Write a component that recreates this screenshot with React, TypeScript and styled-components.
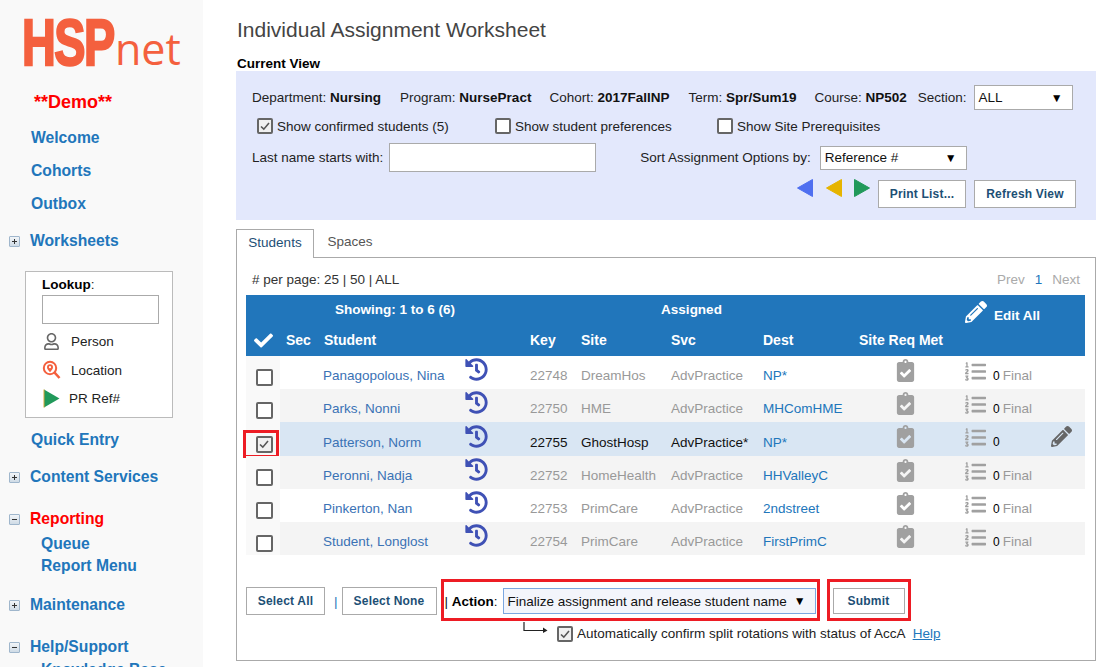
import styled, { createGlobalStyle } from 'styled-components';
import { FaCheck, FaClipboardCheck, FaHistory, FaListOl, FaPencilAlt, FaRegUser } from 'react-icons/fa';

const GlobalStyle = createGlobalStyle`
    html, body {
        margin: 0;
        height: 667px;
        overflow: hidden;
        background: #fff;
        font-family: "Liberation Sans", Arial, sans-serif;
        font-size: 13.5px;
        color: #222;
    }
`;

const Page = styled.div`
    display: flex;
    height: 667px;
    overflow: hidden;
`;

const Sidebar = styled.nav`
    width: 203px;
    flex: none;
    background: #f9f9f9;
    display: flex;
    flex-direction: column;
    padding-top: 5px;
    box-sizing: border-box;
    height: 667px;
    overflow: hidden;
`;

const Logo = styled.svg`
    display: block;
    margin-left: 22px;
    flex: none;
`;

const DemoTag = styled.div`
    margin: 11px 0 8px 34px;
    color: #ff0000;
    font-size: 18px;
    font-weight: 700;
    line-height: 22px;
`;

const NavLink = styled.a<{ $mt?: number }>`
    display: block;
    margin: ${({ $mt }) => $mt ?? 0}px 0 0 31px;
    height: 33px;
    line-height: 33px;
    font-size: 15.7px;
    font-weight: 700;
    color: #2176bb;
    flex: none;
`;

const SubLink = styled.a<{ $mt?: number }>`
    display: block;
    margin: ${({ $mt }) => $mt ?? 0}px 0 0 41px;
    height: 22px;
    line-height: 22px;
    font-size: 15.7px;
    font-weight: 700;
    color: #2176bb;
    flex: none;
`;

const Group = styled.div<{ $mt: number; $active?: boolean }>`
    display: flex;
    align-items: center;
    margin: ${({ $mt }) => $mt}px 0 0 9px;
    height: 24px;
    gap: 10px;
    font-size: 15.7px;
    font-weight: 700;
    color: ${({ $active }) => ($active ? '#ff0000' : '#2176bb')};
    flex: none;
`;

const Toggle = styled.span`
    position: relative;
    width: 9px;
    height: 9px;
    border: 1px solid #9fb6cc;
    border-radius: 1px;
    background: linear-gradient(#f2f5f8, #cfdbe6);
    flex: none;

    &:before {
        content: "";
        position: absolute;
        left: 2px;
        right: 2px;
        top: 4px;
        height: 1px;
        background: #333;
    }
`;

const PlusToggle = styled(Toggle)`
    &:after {
        content: "";
        position: absolute;
        top: 2px;
        bottom: 2px;
        left: 4px;
        width: 1px;
        background: #333;
    }
`;

const LookupBox = styled.div`
    margin: 18px 0 0 25px;
    width: 148px;
    height: 147px;
    box-sizing: border-box;
    border: 1px solid #bbb;
    background: #fff;
    padding: 4px 0 0 16px;
    flex: none;
    color: #222;
`;

const LookupLabel = styled.div`
    line-height: 17px;
    margin-bottom: 2px;

    b {
        color: #000;
    }
`;

const LookupInput = styled.input`
    display: block;
    width: 117px;
    height: 29px;
    box-sizing: border-box;
    border: 1px solid #aaa;
    background: #fff;
    margin-bottom: 3px;
`;

const LookupRow = styled.div<{ $gap: number; $h: number }>`
    display: flex;
    align-items: center;
    height: ${({ $h }) => $h}px;
    gap: ${({ $gap }) => $gap}px;
`;

const LookupIcon = styled.span`
    width: 19px;
    display: flex;
    justify-content: center;
    align-items: center;
    color: #666;
    flex: none;
    font-size: 17px;
`;

const Main = styled.main`
    flex: 1;
    min-width: 0;
    padding-left: 33px;
    padding-right: 7px;
`;

const Title = styled.h1`
    margin: 0;
    padding-top: 17px;
    height: 25px;
    line-height: 25px;
    font-size: 21px;
    font-weight: 400;
    color: #444;
    padding-left: 1px;
`;

const ViewLabel = styled.div`
    margin-top: 13px;
    padding-left: 1px;
    height: 16px;
    line-height: 17px;
    font-weight: 700;
    color: #000;
`;

const ViewPanel = styled.section`
    height: 149px;
    box-sizing: border-box;
    background: #e3e8fc;
    padding: 14px 20px 0 16px;
`;

const InfoRow = styled.div`
    display: flex;
    align-items: center;
    height: 25px;
`;

const Info = styled.span<{ $gap: number }>`
    margin-right: ${({ $gap }) => $gap}px;
    white-space: nowrap;

    b {
        color: #111;
    }
`;

const OptionRow = styled.div`
    display: grid;
    grid-template-columns: 238px 222px auto;
    margin: 7px 0 0 5px;
    height: 18px;
    align-items: center;
`;

const CheckLabel = styled.label`
    display: flex;
    align-items: center;
    gap: 4px;
    white-space: nowrap;
`;

const Box = styled.span<{ $size?: number; $tint?: boolean }>`
    width: ${({ $size }) => $size ?? 16}px;
    height: ${({ $size }) => $size ?? 16}px;
    box-sizing: border-box;
    border: 2px solid #666;
    border-radius: 2px;
    background: ${({ $tint }) => ($tint ? '#f0f0f0' : '#fff')};
    display: flex;
    align-items: center;
    justify-content: center;
    flex: none;
`;

const ConfirmBox = styled(Box)`
    margin: 0 4px 0 9px;
`;

const FilterRow = styled.div`
    display: flex;
    align-items: center;
    margin-top: 8px;
    height: 29px;
`;

const TextField = styled.input`
    width: 207px;
    height: 29px;
    box-sizing: border-box;
    border: 1px solid #aaa;
    background: #fff;
    margin: 0 44px 0 6px;
`;

const Dropdown = styled.div<{ $w: number; $h: number; $ml?: number; $focus?: boolean }>`
    width: ${({ $w }) => $w}px;
    height: ${({ $h }) => $h}px;
    margin-left: ${({ $ml }) => $ml ?? 0}px;
    box-sizing: border-box;
    border: 1px solid ${({ $focus }) => ($focus ? '#7ba7e0' : '#aaa')};
    background: ${({ $focus }) => ($focus ? '#f3f5fb' : '#fff')};
    display: flex;
    align-items: center;
    justify-content: space-between;
    padding: 0 9px 0 4px;
    flex: none;
    color: #111;
    white-space: nowrap;

    i {
        font-style: normal;
        font-size: 12px;
        color: #000;
    }
`;

const ActionRow = styled.div`
    display: flex;
    align-items: center;
    justify-content: flex-end;
    margin-top: 8px;
    height: 28px;
`;

const Arrow = styled.svg<{ $mr: number }>`
    display: block;
    margin: -12px ${({ $mr }) => $mr}px 0 0;
`;

const Button = styled.button<{ $w: number; $h?: number; $mr?: number }>`
    width: ${({ $w }) => $w}px;
    height: ${({ $h }) => $h ?? 28}px;
    margin-right: ${({ $mr }) => $mr ?? 0}px;
    box-sizing: border-box;
    border: 1px solid #aaa;
    background: #fff;
    color: #1d4f75;
    font-family: inherit;
    font-size: 12px;
    font-weight: 700;
    padding: 0;
    flex: none;
    letter-spacing: 0.2px;
`;

const Tabs = styled.div`
    margin-top: 9px;
    display: flex;
    height: 28px;
    position: relative;
    z-index: 1;
`;

const Tab = styled.div<{ $active?: boolean }>`
    width: ${({ $active }) => ($active ? 78 : 72)}px;
    box-sizing: border-box;
    height: ${({ $active }) => ($active ? 29 : 28)}px;
    line-height: 25px;
    text-align: center;
    color: ${({ $active }) => ($active ? '#1d4f75' : '#555')};
    background: #fff;
    border: ${({ $active }) => ($active ? '1px solid #aaa' : '0')};
    border-bottom: 0;
`;

const TabBody = styled.section`
    border: 1px solid #aaa;
    height: 404px;
    box-sizing: border-box;
    padding: 0 10px 0 9px;
`;

const PagerRow = styled.div`
    display: flex;
    justify-content: space-between;
    align-items: center;
    height: 37px;
    padding: 5px 0 0 6px;
    box-sizing: border-box;
    color: #333;
    margin-right: 5px;
`;

const PagerLinks = styled.div`
    display: flex;
    gap: 10px;
    color: #aaa;

    b {
        font-weight: 400;
        color: #2176bb;
    }
`;

const gridColumns = '34px 40px 140px 67px 51px 90px 92px 96px 104px 88px 36px';

const TableHead = styled.div`
    display: grid;
    grid-template-columns: ${gridColumns};
    grid-template-rows: 29px 32px;
    background: #2176bb;
    color: #fff;
    font-size: 14px;
    font-weight: 700;
    align-items: center;
`;

const HeadCell = styled.div<{ $col: string; $row: number; $pad?: number; $center?: boolean; $small?: boolean }>`
    grid-column: ${({ $col }) => $col};
    grid-row: ${({ $row }) => $row};
    padding-left: ${({ $pad }) => $pad ?? 3}px;
    text-align: ${({ $center }) => ($center ? 'center' : 'left')};
    font-size: ${({ $small }) => ($small ? 13.5 : 14)}px;
    white-space: nowrap;
    display: ${({ $center }) => ($center ? 'block' : 'flex')};
    align-items: center;
`;

const EditAll = styled(HeadCell)`
    gap: 7px;
    margin-top: 4px;

    span {
        padding-top: 8px;
        font-size: 13.5px;
    }
`;

const Row = styled.div<{ $tone: 'plain' | 'alt' | 'picked' }>`
    display: grid;
    grid-template-columns: ${gridColumns};
    height: ${({ $tone }) => ($tone === 'picked' ? 34 : 33)}px;
    align-items: center;
    background: ${({ $tone }) => ($tone === 'alt' ? '#f4f4f4' : $tone === 'picked' ? '#d9e6f3' : '#fff')};
    color: #999;
`;

const CheckCell = styled.div<{ $marked?: boolean }>`
    height: 100%;
    box-sizing: border-box;
    padding: 10px 0 0 2px;
    background: #f9f9f9;
    display: flex;
    align-items: center;
    justify-content: center;
    position: relative;

    ${({ $marked }) => $marked && `
        &:after {
            content: "";
            position: absolute;
            left: -3px;
            top: 8px;
            width: 36px;
            height: 28px;
            box-sizing: border-box;
            border: 3px solid #ed1c24;
        }
    `}
`;

const Cell = styled.div<{ $color?: string }>`
    padding: 6px 0 0 3px;
    color: ${({ $color }) => $color ?? 'inherit'};
    white-space: nowrap;
`;

const HistoryCell = styled.div`
    display: flex;
    padding-left: 5px;
    margin-top: -6px;
    color: #3f51b5;
    font-size: 23px;
`;

const RequirementCell = styled.div`
    display: flex;
    justify-content: center;
    padding-right: 5px;
    margin-top: -5px;
    color: #a0a0a0;
    font-size: 23px;
`;

const ListCell = styled.div`
    display: flex;
    align-items: center;
    padding: 6px 0 0 5px;
    color: #999;

    svg {
        font-size: 21px;
        color: #a0a0a0;
        margin: -9px 7px 0 0;
    }

    b {
        font-weight: 400;
        color: #000;
        font-size: 12px;
        margin-right: 3px;
    }
`;

const PencilCell = styled.div`
    display: flex;
    color: #666;
    font-size: 21px;
    padding-left: 3px;
    margin-top: -5px;
`;

const Footer = styled.div`
    display: flex;
    align-items: center;
    margin-top: 24px;
    height: 42px;

    > button {
        margin-top: 2px;
    }
`;

const Divider = styled.span`
    margin: 2px 4px 0 9px;
    color: #2176bb;
`;

const Outlined = styled.div<{ $w: number; $ml: number }>`
    width: ${({ $w }) => $w}px;
    height: 42px;
    margin-left: ${({ $ml }) => $ml}px;
    padding-top: 2px;
    box-sizing: border-box;
    border: 3px solid #ed1c24;
    display: flex;
    align-items: center;
    flex: none;
`;

const ActionLabel = styled.span`
    width: 59px;
    padding-left: 1px;
    box-sizing: border-box;
    white-space: nowrap;
    color: #111;
    flex: none;

    b {
        color: #000;
    }
`;

const SubmitBox = styled(Outlined)`
    justify-content: center;
`;

const ConfirmRow = styled.div`
    display: flex;
    align-items: center;
    margin: 3px 0 0 277px;
    height: 19px;
    color: #222;
    white-space: nowrap;
`;

const ElbowArrow = styled.svg`
    display: block;
    margin-top: -12px;
    flex: none;
`;

const HelpLink = styled.a`
    margin-left: 7px;
    color: #2176bb;
    text-decoration: underline;
`;

const CheckMark = ({ size = 12 }: { size?: number }) => (
    <svg width={size} height={size} viewBox="0 0 12 12" fill="none">
        <path d="M2 6.5 4.8 9.2 10 3" stroke="#555" strokeWidth="1.6" />
    </svg>
);

const NavArrow = ({ color, dir, mr }: { color: string; dir: 'left' | 'right'; mr: number }) => (
    <Arrow $mr={mr} width="18" height="20" viewBox="0 0 18 20">
        <path
            d={dir === 'left' ? 'M16.5 1.5V18.5L1.5 10Z' : 'M1.5 1.5V18.5L16.5 10Z'}
            fill={color}
            stroke={color}
            strokeLinejoin="round"
        />
    </Arrow>
);

const students = [
    { name: 'Panagopolous, Nina', key: '22748', site: 'DreamHos', svc: 'AdvPractice', dest: 'NP*', final: true },
    { name: 'Parks, Nonni', key: '22750', site: 'HME', svc: 'AdvPractice', dest: 'MHComHME', final: true },
    { name: 'Patterson, Norm', key: '22755', site: 'GhostHosp', svc: 'AdvPractice*', dest: 'NP*', final: false },
    { name: 'Peronni, Nadja', key: '22752', site: 'HomeHealth', svc: 'AdvPractice', dest: 'HHValleyC', final: true },
    { name: 'Pinkerton, Nan', key: '22753', site: 'PrimCare', svc: 'AdvPractice', dest: '2ndstreet', final: true },
    { name: 'Student, Longlost', key: '22754', site: 'PrimCare', svc: 'AdvPractice', dest: 'FirstPrimC', final: true },
];

const App = () => {
    return (
        <Page>
            <GlobalStyle />
            <Sidebar>
                <Logo width="165" height="75" viewBox="0 0 165 75">
                    <text transform="translate(0 60) scale(.72 1)" fontFamily="Liberation Sans" fontWeight="700" fontSize="65" letterSpacing="-2" fill="#f4603e" stroke="#f4603e" strokeWidth="2.4">HSP</text>
                    <text x="93" y="60" fontFamily="Open Sans" fontWeight="400" fontSize="43" fill="#f4603e">net</text>
                </Logo>
                <DemoTag>**Demo**</DemoTag>
                <NavLink>Welcome</NavLink>
                <NavLink>Cohorts</NavLink>
                <NavLink>Outbox</NavLink>
                <Group $mt={9}><PlusToggle />Worksheets</Group>
                <LookupBox>
                    <LookupLabel><b>Lookup</b>:</LookupLabel>
                    <LookupInput />
                    <LookupRow $gap={10} $h={28}>
                        <LookupIcon><FaRegUser /></LookupIcon>
                        Person
                    </LookupRow>
                    <LookupRow $gap={10} $h={30}>
                        <LookupIcon>
                            <svg width="19" height="20" viewBox="0 0 19 20" fill="none">
                                <circle cx="8" cy="8" r="6.2" stroke="#f4603e" strokeWidth="2" />
                                <path d="M12.5 12.5 17.5 18" stroke="#f4603e" strokeWidth="2.6" />
                                <path d="M8 12.2C6.2 10 5 8.8 5 7.2a3 3 0 0 1 6 0c0 1.6-1.2 2.8-3 5Z" fill="#f4603e" />
                                <circle cx="8" cy="7.2" r="1.1" fill="#fff" />
                            </svg>
                        </LookupIcon>
                        Location
                    </LookupRow>
                    <LookupRow $gap={8} $h={26}>
                        <LookupIcon>
                            <svg width="17" height="19" viewBox="0 0 17 19">
                                <path d="M1 0.5V18.5L16.5 9.5Z" fill="#21995a" />
                                <rect x="0.5" y="0.5" width="1" height="18" fill="#d9a83a" />
                            </svg>
                        </LookupIcon>
                        PR Ref#
                    </LookupRow>
                </LookupBox>
                <NavLink $mt={5}>Quick Entry</NavLink>
                <Group $mt={9}><PlusToggle />Content Services</Group>
                <Group $mt={18} $active><Toggle />Reporting</Group>
                <SubLink $mt={2}>Queue</SubLink>
                <SubLink>Report Menu</SubLink>
                <Group $mt={16}><PlusToggle />Maintenance</Group>
                <Group $mt={18}><Toggle />Help/Support</Group>
                <SubLink>Knowledge Base</SubLink>
            </Sidebar>
            <Main>
                <Title>Individual Assignment Worksheet</Title>
                <ViewLabel>Current View</ViewLabel>
                <ViewPanel>
                    <InfoRow>
                        <Info $gap={19}>Department: <b>Nursing</b></Info>
                        <Info $gap={18}>Program: <b>NursePract</b></Info>
                        <Info $gap={19}>Cohort: <b>2017FallNP</b></Info>
                        <Info $gap={18}>Term: <b>Spr/Sum19</b></Info>
                        <Info $gap={11}>Course: <b>NP502</b></Info>
                        <Info $gap={7}>Section:</Info>
                        <Dropdown $w={99} $h={25}>ALL<i>▼</i></Dropdown>
                    </InfoRow>
                    <OptionRow>
                        <CheckLabel><Box $tint><CheckMark /></Box>Show confirmed students (5)</CheckLabel>
                        <CheckLabel><Box />Show student preferences</CheckLabel>
                        <CheckLabel><Box />Show Site Prerequisites</CheckLabel>
                    </OptionRow>
                    <FilterRow>
                        Last name starts with:
                        <TextField />
                        Sort Assignment Options by:
                        <Dropdown $w={147} $h={24} $ml={9}>Reference #<i>▼</i></Dropdown>
                    </FilterRow>
                    <ActionRow>
                        <NavArrow color="#4f6ff0" dir="left" mr={11} />
                        <NavArrow color="#e6b400" dir="left" mr={10} />
                        <NavArrow color="#21995a" dir="right" mr={7} />
                        <Button $w={88} $mr={8}>Print List...</Button>
                        <Button $w={102}>Refresh View</Button>
                    </ActionRow>
                </ViewPanel>
                <Tabs>
                    <Tab $active>Students</Tab>
                    <Tab>Spaces</Tab>
                </Tabs>
                <TabBody>
                    <PagerRow>
                        <span># per page: 25 | 50 | ALL</span>
                        <PagerLinks>Prev <b>1</b> Next</PagerLinks>
                    </PagerRow>
                    <TableHead>
                        <HeadCell $col="3 / 5" $row={1} $pad={15} $small>Showing: 1 to 6 (6)</HeadCell>
                        <HeadCell $col="5 / 9" $row={1} $center $pad={0} $small>Assigned</HeadCell>
                        <EditAll $col="10 / 12" $row={1} $pad={5}>
                            <FaPencilAlt size={22} /><span>Edit All</span>
                        </EditAll>
                        <HeadCell $col="1" $row={2} $pad={8}><FaCheck size={19} /></HeadCell>
                        <HeadCell $col="2" $row={2} $pad={6}>Sec</HeadCell>
                        <HeadCell $col="3" $row={2} $pad={4}>Student</HeadCell>
                        <HeadCell $col="5" $row={2}>Key</HeadCell>
                        <HeadCell $col="6" $row={2}>Site</HeadCell>
                        <HeadCell $col="7" $row={2}>Svc</HeadCell>
                        <HeadCell $col="8" $row={2}>Dest</HeadCell>
                        <HeadCell $col="9" $row={2}>Site Req Met</HeadCell>
                    </TableHead>
                    {students.map((student, index) => {
                        const picked = student.name === 'Patterson, Norm';
                        return (
                            <Row key={student.key} $tone={picked ? 'picked' : index % 2 ? 'alt' : 'plain'}>
                                <CheckCell $marked={picked}>
                                    <Box $size={17} $tint={picked}>{picked && <CheckMark />}</Box>
                                </CheckCell>
                                <Cell />
                                <Cell $color="#3a72b5">{student.name}</Cell>
                                <HistoryCell><FaHistory /></HistoryCell>
                                <Cell $color={picked ? '#111' : undefined}>{student.key}</Cell>
                                <Cell $color={picked ? '#111' : undefined}>{student.site}</Cell>
                                <Cell $color={picked ? '#111' : undefined}>{student.svc}</Cell>
                                <Cell $color="#2176bb">{student.dest}</Cell>
                                <RequirementCell><FaClipboardCheck /></RequirementCell>
                                <ListCell><FaListOl /><b>0</b>{student.final && 'Final'}</ListCell>
                                <PencilCell>{picked && <FaPencilAlt />}</PencilCell>
                            </Row>
                        );
                    })}
                    <Footer>
                        <Button $w={79}>Select All</Button>
                        <Divider>|</Divider>
                        <Button $w={95}>Select None</Button>
                        <Outlined $w={379} $ml={4}>
                            <ActionLabel>| <b>Action</b>:</ActionLabel>
                            <Dropdown $w={313} $h={26} $focus>Finalize assignment and release student name<i>▼</i></Dropdown>
                        </Outlined>
                        <SubmitBox $w={84} $ml={7}>
                            <Button $w={72} $h={26}>Submit</Button>
                        </SubmitBox>
                    </Footer>
                    <ConfirmRow>
                        <ElbowArrow width="25" height="11" viewBox="0 0 25 11" fill="none">
                            <path d="M1 0V8.5H21" stroke="#222" strokeWidth="1.2" />
                            <path d="M20 5.5 24.5 8.5 20 11Z" fill="#222" />
                        </ElbowArrow>
                        <ConfirmBox $tint><CheckMark /></ConfirmBox>
                        Automatically confirm split rotations with status of AccA
                        <HelpLink>Help</HelpLink>
                    </ConfirmRow>
                </TabBody>
            </Main>
        </Page>
    );
};

export default App;
